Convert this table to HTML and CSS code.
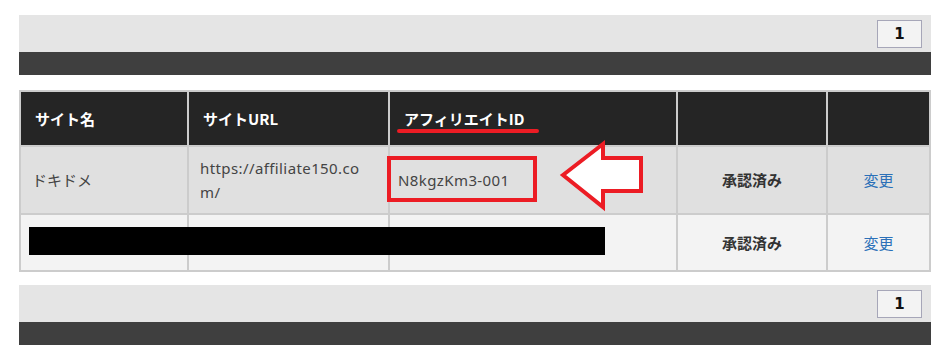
FILE: index.html
```html
<!DOCTYPE html>
<html lang="ja">
<head>
<meta charset="utf-8">
<title>サイト一覧</title>
<link rel="stylesheet" href="styles.css">
</head>
<body>
<div class="page">
  <div class="pager"><span class="pg">1</span></div>
  <div class="darkbar"></div>

  <div class="tablewrap">
    <table class="sites">
      <colgroup>
        <col class="c-name">
        <col class="c-url">
        <col class="c-id">
        <col class="c-status">
        <col class="c-act">
      </colgroup>
      <thead>
        <tr>
          <th>サイト名</th>
          <th>サイトURL</th>
          <th>アフィリエイトID</th>
          <th></th>
          <th></th>
        </tr>
      </thead>
      <tbody>
        <tr class="r1">
          <td>ドキドメ</td>
          <td class="url">https://affiliate150.com/</td>
          <td class="id">N8kgzKm3-001</td>
          <td class="status">承認済み</td>
          <td class="act"><a href="#">変更</a></td>
        </tr>
        <tr class="r2">
          <td></td>
          <td></td>
          <td></td>
          <td class="status">承認済み</td>
          <td class="act"><a href="#">変更</a></td>
        </tr>
      </tbody>
    </table>
    <svg class="marks" width="912" height="182" viewBox="0 0 912 182" aria-hidden="true">
      <line x1="380" y1="41" x2="518" y2="41" stroke="#ec1c24" stroke-width="4" stroke-linecap="round"/>
      <rect x="370" y="68" width="146" height="42" fill="none" stroke="#ec1c24" stroke-width="4"/>
      <polygon points="544,85 584,54 584,68 622,68 622,101 584,101 584,117" fill="#fff" stroke="#ec1c24" stroke-width="4" stroke-linejoin="miter"/>
      <rect x="10" y="137" width="576" height="28" fill="#000"/>
    </svg>
  </div>

  <div class="pager"><span class="pg">1</span></div>
  <div class="darkbar"></div>
</div>
</body>
</html>
```

FILE: styles.css
```css
html, body {
  margin: 0;
  padding: 0;
  background: #fff;
}

body {
  font-family: "Noto Sans", "Noto Sans CJK JP", sans-serif;
  color: #444;
}

.page {
  padding: 15px 20px 0 19px;
}

.pager {
  height: 37px;
  box-sizing: border-box;
  background: #e5e5e5;
  display: flex;
  justify-content: flex-end;
  align-items: flex-start;
  padding: 5px 9px 0;
}

.pg {
  width: 45px;
  height: 28px;
  box-sizing: border-box;
  border: 1px solid #a6a6b8;
  background: #f3f3f3;
  display: flex;
  align-items: center;
  justify-content: center;
  font-family: "DejaVu Sans", sans-serif;
  font-weight: 700;
  font-size: 15px;
  color: #111;
}

.darkbar {
  height: 23px;
  background: #3f3f3f;
}

.tablewrap {
  position: relative;
  margin: 15px 0 13px;
}

.sites {
  width: 100%;
  table-layout: fixed;
  border-collapse: separate;
  border-spacing: 2px;
  background: #cccccc;
}

.c-name { width: 166px; }
.c-url { width: 199px; }
.c-id { width: 286px; }
.c-status { width: 148px; }
.c-act { width: 101px; }

.sites th {
  height: 53px;
  padding: 0 0 0 14px;
  background: #252525;
  color: #fff;
  text-align: left;
  font-family: "Noto Sans CJK JP", sans-serif;
  font-weight: 700;
  font-size: 15px;
  vertical-align: middle;
}

.sites td {
  padding: 9px 20px 9px 11px;
  font-size: 15px;
  line-height: 24px;
  color: #444;
  vertical-align: middle;
  word-break: break-all;
}

.r1 td { background: #e0e0e0; }
.r2 td { background: #f3f3f3; height: 37px; }

.sites td.url,
.sites td.id {
  letter-spacing: 0.4px;
}

.sites td.id { padding-left: 8px; }

.sites td.status {
  padding-left: 0;
  padding-right: 0;
  text-align: center;
  font-weight: 700;
  color: #333;
}

.sites td.act {
  padding-left: 0;
  padding-right: 0;
  text-align: center;
}

.act a {
  color: #2b70b8;
  text-decoration: none;
}

.marks {
  position: absolute;
  top: 0;
  left: 0;
  pointer-events: none;
  overflow: visible;
}
```
